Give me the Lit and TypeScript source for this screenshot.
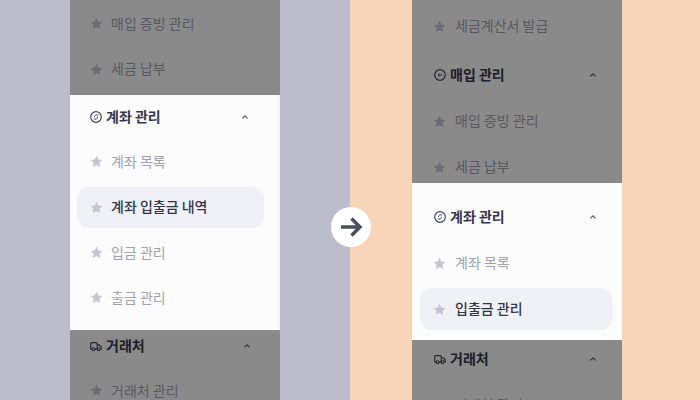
import { LitElement, html, css, svg } from "lit";
import { customElement, property } from "lit/decorators.js";

const star = svg`<path d="M6.5 .6 8.3 4.4l4.1.5-3 2.9.8 4.2-3.7-2.1-3.7 2.1.8-4.2-3-2.9 4.1-.5z" fill="currentColor"/>`;

const icons: Record<string, unknown> = {
  coin: svg`<circle cx="6" cy="6" r="5.300" fill="none" stroke="currentColor" stroke-width="1.200"/><path d="M8.200 4.200C6.700 3.200 4.500 4.100 4.300 6M3.800 7.800c1.500 1 3.700.1 3.900-1.800" fill="none" stroke="currentColor" stroke-width="1"/>`,
  back: svg`<circle cx="6" cy="6" r="5.300" fill="none" stroke="currentColor" stroke-width="1.200"/><path d="M8.400 6H4M5.600 4.400 4 6l1.600 1.600" fill="none" stroke="currentColor" stroke-width="1"/>`,
  truck: svg`<path d="M2 9.200H1.600Q.7 9.200.7 8.300V3.600q0-1 1-1h4.500q1 0 1 1v5.600H4.800M7.200 4.800h2l2.100 2.200v1.400q0 .8-.8.8h-.3" fill="none" stroke="currentColor" stroke-width="1.200"/><circle cx="3.400" cy="9.200" r="1.400" fill="none" stroke="currentColor" stroke-width="1.100"/><circle cx="8.700" cy="9.200" r="1.400" fill="none" stroke="currentColor" stroke-width="1.100"/>`,
};

@customElement("menu-item")
class MenuItem extends LitElement {
  @property() label = "";
  @property({ type: Boolean }) active = false;
  static styles = css`
    :host { display: block; padding: 2px 0; height: var(--row-h); box-sizing: border-box; }
    .row {
      height: 100%;
      margin: 0 var(--active-inset-r) 0 var(--active-inset);
      padding-left: var(--star-pad);
      display: flex;
      align-items: center;
      border-radius: 11px;
      color: #a1a3ac;
      font-size: 14px;
      font-weight: 400;
      box-sizing: border-box;
    }
    .row.active { background: #f0f1f6; color: #33364a; font-weight: 500; }
    svg { width: 13px; height: 13px; color: #c4c6d2; margin-right: var(--star-gap); flex: none; }
    span { margin-bottom: 2px; white-space: nowrap; }
  `;
  render() {
    return html`<div class="row ${this.active ? "active" : ""}">
      <svg viewBox="0 0 13 13">${star}</svg><span>${this.label}</span>
    </div>`;
  }
}

@customElement("menu-head")
class MenuHead extends LitElement {
  @property() label = "";
  @property() icon = "coin";
  static styles = css`
    :host { display: block; }
    .head {
      height: 32px;
      margin-bottom: var(--head-gap);
      padding: 0 var(--chev-r) 0 var(--head-pad);
      display: flex;
      align-items: center;
      color: #35374a;
      font-size: 14px;
      font-weight: 700;
    }
    .ico { width: 12px; height: 12px; margin-right: 4px; color: #44465a; flex: none; }
    span { flex: 1; margin-bottom: 2px; }
    .chev { width: 10px; height: 10px; color: #5b5d6c; flex: none; }
  `;
  render() {
    return html`<div class="head">
      <svg class="ico" viewBox="0 0 12 12">${icons[this.icon]}</svg>
      <span>${this.label}</span>
      <svg class="chev" viewBox="0 0 10 10"><path d="M2.400 6.400 5 3.900l2.600 2.500" fill="none" stroke="currentColor" stroke-width="1.300"/></svg>
    </div>`;
  }
}

@customElement("app-root")
class AppRoot extends LitElement {
  static styles = css`
    :host { display: block; width: 700px; height: 400px; position: relative; overflow: hidden;
      font-family: "Noto Sans CJK KR", "Noto Sans", sans-serif; }
    .stage { display: grid; grid-template-columns: 350px 350px; height: 400px; }
    .half { height: 400px; }
    .half.l { background: #bbbdca; padding-left: 70px;
      --row-h: 45.33px; --head-gap: 6.3px; --head-pad: 20px; --star-pad: 13px; --star-gap: 8px;
      --active-inset: 7px; --active-inset-r: 14px; --chev-r: 28px; }
    .half.r { background: #f8d4b8; padding-left: 62px;
      --row-h: 46px; --head-gap: 7px; --head-pad: 22px; --star-pad: 13px; --star-gap: 9px;
      --active-inset: 8px; --active-inset-r: 10px; --chev-r: 24px; }
    .panel { width: 210px; height: 400px; display: flex; flex-direction: column; background: #fcfcfd; }
    .band { overflow: hidden; position: relative; }
    .dim::after { content: ""; position: absolute; inset: 0; background: rgba(0, 0, 0, 0.45); }
    .top { display: flex; flex-direction: column; justify-content: flex-end; flex: none; }
    .fill { flex: 1; }
    .l .top { height: 95px; }
    .l .top .inner { margin-bottom: 3.33px; }
    .r .top { height: 183px; }
    .r .top .inner { margin-bottom: -7px; }
    .r .top menu-head { margin-top: 10px; }
    .l .bright { height: 235px; padding-top: 6px; box-sizing: border-box; border-right: 2px solid #f5f5f9; }
    .r .bright { height: 157px; padding-top: 18px; box-sizing: border-box; }
    .r .fill { padding-top: 3px; }
    .go {
      position: absolute; left: 331px; top: 207px; width: 40px; height: 40px; border-radius: 50%;
      background: #fff; display: flex; align-items: center; justify-content: center;
    }
    .go svg { width: 24px; height: 24px; }
  `;
  render() {
    return html`<div class="stage">
      <section class="half l">
        <div class="panel">
          <div class="band dim top"><div class="inner">
            <menu-item label="매입 증빙 관리"></menu-item>
            <menu-item label="세금 납부"></menu-item>
          </div></div>
          <div class="band bright">
            <menu-head label="계좌 관리" icon="coin"></menu-head>
            <menu-item label="계좌 목록"></menu-item>
            <menu-item label="계좌 입출금 내역" active></menu-item>
            <menu-item label="입금 관리"></menu-item>
            <menu-item label="출금 관리"></menu-item>
          </div>
          <div class="band dim fill">
            <menu-head label="거래처" icon="truck"></menu-head>
            <menu-item label="거래처 관리"></menu-item>
          </div>
        </div>
      </section>
      <section class="half r">
        <div class="panel">
          <div class="band dim top"><div class="inner">
            <menu-item label="세금계산서 발급"></menu-item>
            <menu-head label="매입 관리" icon="back"></menu-head>
            <menu-item label="매입 증빙 관리"></menu-item>
            <menu-item label="세금 납부"></menu-item>
          </div></div>
          <div class="band bright">
            <menu-head label="계좌 관리" icon="coin"></menu-head>
            <menu-item label="계좌 목록"></menu-item>
            <menu-item label="입출금 관리" active></menu-item>
          </div>
          <div class="band dim fill">
            <menu-head label="거래처" icon="truck"></menu-head>
            <menu-item label="거래처 관리"></menu-item>
          </div>
        </div>
      </section>
    </div>
    <div class="go">
      <svg viewBox="0 0 24 24"><path d="M2 12h18M12.500 3.500 21 12l-8.500 8.500" fill="none" stroke="#4a4c60" stroke-width="3.400"/></svg>
    </div>`;
  }
}
